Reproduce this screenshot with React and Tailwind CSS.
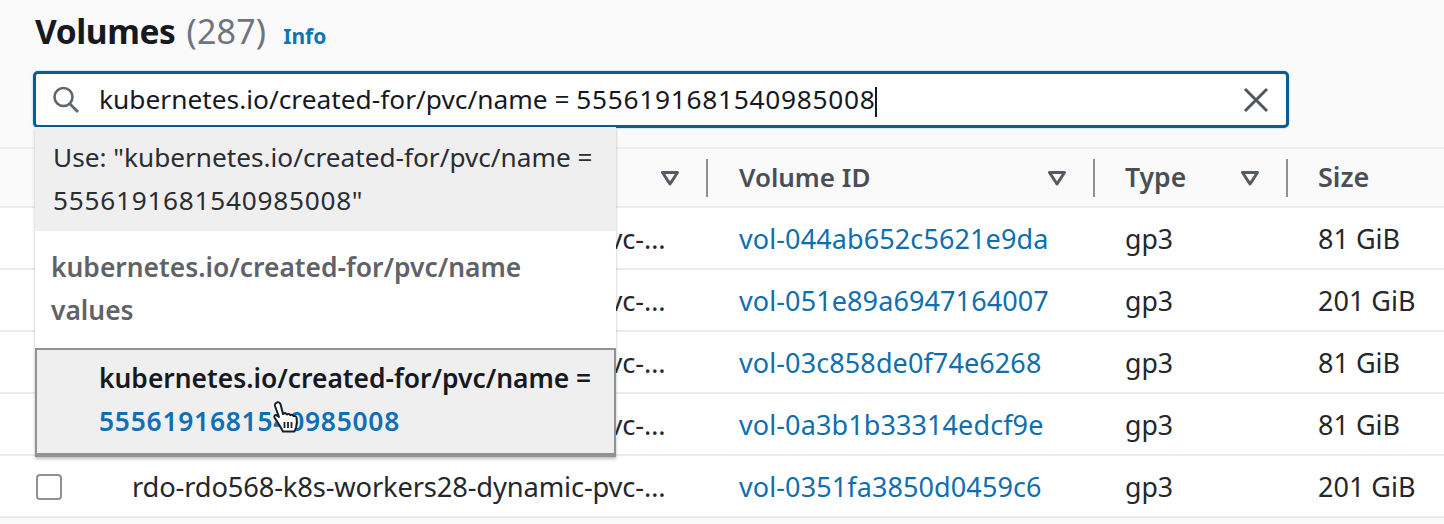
const NAME = "rdo-rdo568-k8s-workers28-dynamic-pvc-…";

const rows = [
  ["vol-044ab652c5621e9da", "gp3", "81 GiB"],
  ["vol-051e89a6947164007", "gp3", "201 GiB"],
  ["vol-03c858de0f74e6268", "gp3", "81 GiB"],
  ["vol-0a3b1b33314edcf9e", "gp3", "81 GiB"],
  ["vol-0351fa3850d0459c6", "gp3", "201 GiB"],
];

function Filter() {
  return (
    <svg width="20" height="16" viewBox="0 0 20 16" className="shrink-0">
      <path d="M2.5 2.5h15L10 14z" fill="none" stroke="#545b64" strokeWidth="3" strokeLinejoin="round" />
    </svg>
  );
}

function Row({ row }) {
  return (
    <div className="grid grid-cols-[739px_386px_193px_1fr] items-center h-[62px] pt-[2px] border-b-2 border-[#ececec] bg-white">
      <div className="flex items-center pl-[36px]">
        <span className="w-[26px] h-[26px] rounded-[4px] border-2 border-[#8d9299] bg-white shrink-0" />
        <span className="ml-[70px] whitespace-nowrap text-[27.300px] tracking-[-0.15px] text-[#24272c]">{NAME}</span>
      </div>
      <a className="text-[#0f6fae] text-[27px] tracking-[0.1px]">{row[0]}</a>
      <span className="text-[26.700px] text-[#24272c]">{row[1]}</span>
      <span className="text-[27px] text-[#24272c]">{row[2]}</span>
    </div>
  );
}

function Cursor() {
  return (
    <svg width="30" height="36" viewBox="0 0 30 36" className="absolute left-[234px] top-[50px]">
      <path
        d="M5 3c2-1.500 4-.5 4.600 1.500L12 14l1-.5c1.500-.5 2.500 0 3 1 1-.8 2.500-.6 3.200.6 1.200-.6 2.600-.2 3.300 1 1-.4 2.500 0 3 1.400.7 3 .5 7-.5 10l-1.500 4H12l-4-7-4.500-7c-.7-1.500.5-2.800 2-2.300L8 17 4 6c-.3-1.200.2-2.400 1-3z"
        fill="#fff"
        stroke="#1b1f24"
        strokeWidth="2"
        strokeLinejoin="round"
      />
      <path d="M13.500 22v6M17 22v6M20.500 22v6" stroke="#1b1f24" strokeWidth="1.800" />
    </svg>
  );
}

function HeadDivider() {
  return <span className="ml-[26px] w-[2px] h-[38px] bg-[#8d9299]" />;
}

export default function App() {
  return (
    <div className="relative w-[1444px] h-[524px] overflow-hidden bg-[#fafafa] font-['Noto_Sans','Open_Sans',sans-serif]">
      <div className="flex items-baseline h-[71px] pl-[35px] pt-[8px]">
        <h1 className="text-[33.500px] font-bold text-[#16191f] leading-[46px] tracking-[-0.4px]">Volumes</h1>
        <span className="ml-[11px] text-[34px] leading-[46px] text-[#6f757c] tracking-[0.2px]">(287)</span>
        <a className="ml-[17px] text-[21px] font-bold text-[#0f73b5]">Info</a>
      </div>

      <div className="mx-[33px] w-[1256px] h-[57px] flex items-center rounded-[5px] border-[3px] border-[#0a5c92] bg-white shadow-[0_0_2px_#7cc4f0]">
        <svg width="30" height="30" viewBox="0 0 30 30" className="ml-[15px] shrink-0">
          <circle cx="12.500" cy="12" r="9" fill="none" stroke="#5f666d" strokeWidth="2.600" />
          <path d="M19 19l8 8" stroke="#5f666d" strokeWidth="2.800" />
        </svg>
        <span className="ml-[18px] text-[26.300px] text-[#16191f] whitespace-nowrap">
          kubernetes.io/created-for/pvc/name ={" "}
          <span className="tracking-[0.7px]">5556191681540985008</span>
          <span className="inline-block w-[2px] h-[30px] align-middle bg-[#16191f]" />
        </span>
        <svg width="28" height="28" viewBox="0 0 28 28" className="ml-auto mr-[16px] shrink-0">
          <path d="M3 3l22 22M25 3L3 25" stroke="#50565c" strokeWidth="3" />
        </svg>
      </div>

      <div className="mt-[19px] border-t-2 border-[#eeeeee]">
        <div className="grid grid-cols-[708px_387px_193px_1fr] items-center h-[59px] border-b-2 border-[#ececec] bg-[#fafafa]">
          <div className="flex items-center justify-end"><Filter /><HeadDivider /></div>
          <div className="flex items-center justify-between pl-[31px]">
            <span className="text-[#4a4f55] font-semibold text-[26px]">Volume ID</span>
            <span className="flex items-center"><Filter /><HeadDivider /></span>
          </div>
          <div className="flex items-center justify-between pl-[30px]">
            <span className="text-[#4a4f55] font-semibold text-[26.500px]">Type</span>
            <span className="flex items-center"><Filter /><HeadDivider /></span>
          </div>
          <div className="pl-[30px]">
            <span className="text-[#4a4f55] font-semibold text-[27px]">Size</span>
          </div>
        </div>
        {rows.map((r) => <Row key={r[0]} row={r} />)}
      </div>

      <div className="absolute left-[35px] top-[127px] w-[581px] bg-white shadow-[0_2px_3px_rgba(0,0,0,0.25)]">
        <div className="bg-[#efefef] h-[104px] px-[18px] pt-[9px] text-[26.200px] leading-[43px] text-[#2a2d31] whitespace-nowrap">
          Use: "kubernetes.io/created-for/pvc/name =<br />
          <span className="tracking-[0.75px]">5556191681540985008"</span>
        </div>
        <div className="bg-white h-[117px] px-[16px] pt-[15px] text-[26.400px] leading-[43px] font-semibold text-[#5f6368] whitespace-nowrap">
          kubernetes.io/created-for/pvc/name<br />values
        </div>
        <div className="relative h-[109px] bg-[#efefef] border-2 border-[#8f9296] border-b-[4px] pl-[62px] pt-[7px] text-[26.400px] leading-[43px] font-semibold whitespace-nowrap">
          <div className="text-[#16191f]">kubernetes.io/created-for/pvc/name =</div>
          <div className="text-[#0f6fb5] tracking-[0.75px]">5556191681540985008</div>
          <Cursor />
        </div>
      </div>
    </div>
  );
}
